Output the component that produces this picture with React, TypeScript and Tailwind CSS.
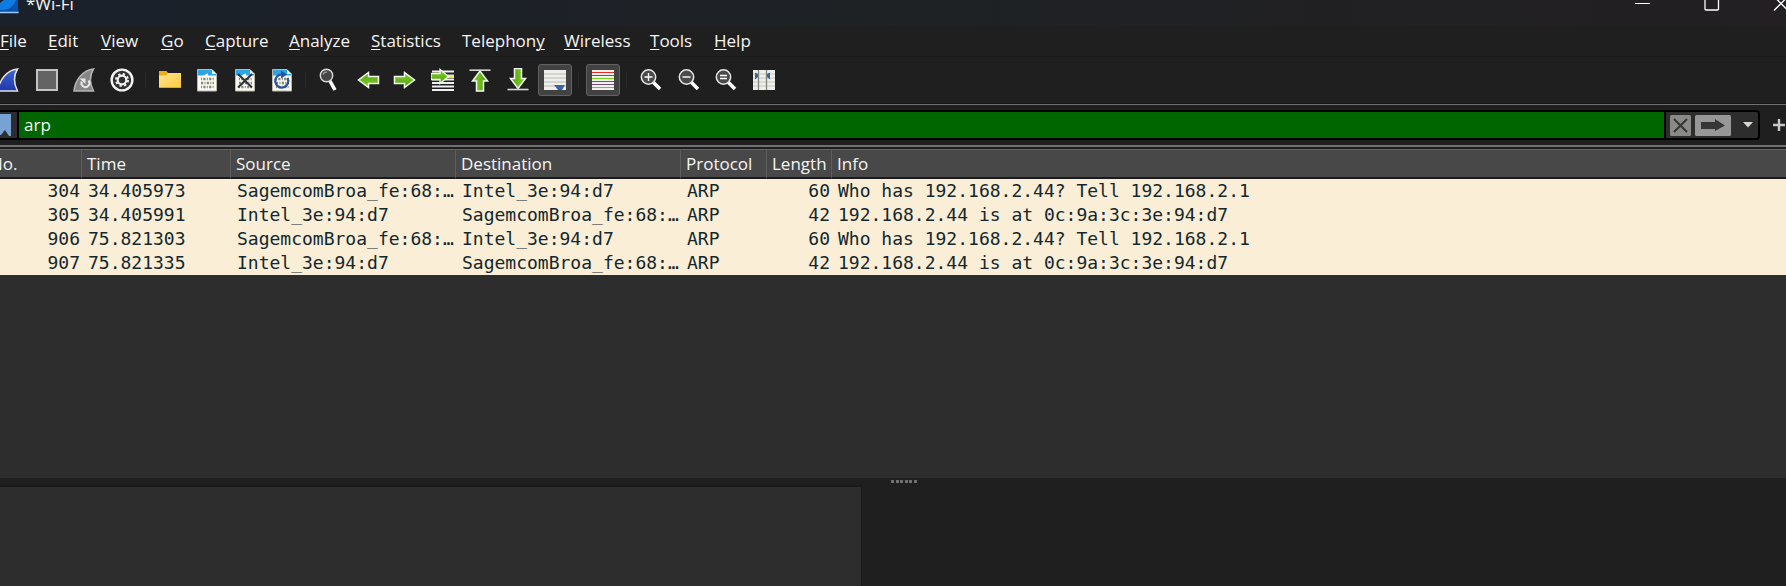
import React from "react";

type P = { children?: React.ReactNode };

const Icon = ({ children }: P) => (
  <svg width="24" height="24" viewBox="0 0 24 24" fill="none" aria-hidden="true" className="shrink-0">
    {children}
  </svg>
);

const FIN = "M1 23C2 12 10 2 20.5 1C16.5 7.500 17 16 20.500 23Z";

const Page = ({ children }: P) => (
  <Icon>
    <path d="M2.500 1.500H17L21.500 6V23H2.500Z" fill="#fbfbf3" stroke="#b9b9a8" />
    <path d="M3 2H17V6H21V7.500H13Q14 3.500 9 7.500H3Z" fill="#2fa4e4" />
    <path d="M17 2V6H21Z" fill="#e8f4fb" />
    {[10.5, 14.5, 18.5].map((y, i) => (
      <path key={y} d={`M6 ${y + 0.5}H19`} stroke="#85857c" strokeWidth="2.600" strokeDasharray={i === 1 ? "2.200 1.300 1 1.300" : "1 1.300 2.200 1.300"} />
    ))}
    {children}
  </Icon>
);

const Lens = ({ sign }: { sign: string }) => (
  <Icon>
    <path d="M14 14L21 21" stroke="#fff" strokeWidth="3.600" />
    <circle cx="9.500" cy="9" r="7.200" fill="#4a4a4a" stroke="#e6e6e6" strokeWidth="1.500" />
    <path d={sign} stroke="#fff" strokeWidth="1.400" />
  </Icon>
);

const RIGHT = "M1.500 8.500H11.500V4.500L21.500 12L11.500 19.500V15.500H1.500Z";

const Arrow = ({ turn, bar }: { turn?: string; bar?: string }) => (
  <Icon>
    <path d={RIGHT} transform={turn} fill="url(#green)" stroke="#f4f8ef" strokeWidth="1.500" />
    {bar && <path d={bar} stroke="#d8d8d8" strokeWidth="1.600" />}
  </Icon>
);

const Sep = () => <span className="mr-[7px] ml-1.5 h-4 w-px shrink-0 bg-[#2a2a2a]" />;

const Tool = ({ label, active, children }: P & { label: string; active?: boolean }) => (
  <button
    type="button"
    aria-label={label}
    className={
      active
        ? "flex h-8 w-[34px] shrink-0 items-center justify-center rounded-[3px] border border-[#626262] bg-[#424242]"
        : "flex h-8 w-[34px] shrink-0 items-center justify-center"
    }
  >
    {children}
  </button>
);

const menus: [string, string, string, string][] = [
  ["", "F", "ile", "w-12"],
  ["", "E", "dit", "w-[53px]"],
  ["", "V", "iew", "w-[60px]"],
  ["", "G", "o", "w-11"],
  ["", "C", "apture", "w-[84px]"],
  ["", "A", "nalyze", "w-[82px]"],
  ["", "S", "tatistics", "w-[91px]"],
  ["Telephon", "y", "", "w-[102px]"],
  ["", "W", "ireless", "w-[86px]"],
  ["", "T", "ools", "w-16"],
  ["", "H", "elp", "w-[60px]"],
];

const columns: [string, string][] = [
  ["No.", "w-[82px]"],
  ["Time", "w-[149px]"],
  ["Source", "w-[225px]"],
  ["Destination", "w-[225px]"],
  ["Protocol", "w-[86px]"],
  ["Length", "w-[65px]"],
  ["Info", ""],
];

const BROA = "SagemcomBroa_fe:68:…";
const INTEL = "Intel_3e:94:d7";
const ASK = "Who has 192.168.2.44? Tell 192.168.2.1";
const REPLY = "192.168.2.44 is at 0c:9a:3c:3e:94:d7";

const packets = [
  ["304", "34.405973", BROA, INTEL, "ARP", "60", ASK],
  ["305", "34.405991", INTEL, BROA, "ARP", "42", REPLY],
  ["906", "75.821303", BROA, INTEL, "ARP", "60", ASK],
  ["907", "75.821335", INTEL, BROA, "ARP", "42", REPLY],
];

export default function App() {
  return (
    <div className="flex min-h-screen flex-col overflow-hidden bg-[#1f1f1f] font-['Open_Sans','Noto_Sans',sans-serif] text-[17px] text-[#f5f5f5]">
      <svg width="0" height="0" className="absolute" aria-hidden="true">
        <defs>
          <linearGradient id="green" x1="0" y1="0" x2="0" y2="1">
            <stop offset="0" stopColor="#85cc2e" />
            <stop offset="1" stopColor="#4fa50a" />
          </linearGradient>
          <linearGradient id="blue" x1="0" y1="0" x2="0" y2="1">
            <stop offset="0" stopColor="#3c66d6" />
            <stop offset="1" stopColor="#2038a8" />
          </linearGradient>
          <linearGradient id="gold" x1="0" y1="0" x2="1" y2="1">
            <stop offset="0" stopColor="#ffe593" />
            <stop offset="1" stopColor="#ffc93b" />
          </linearGradient>
        </defs>
      </svg>

      <header className="flex h-[26px] items-start justify-between overflow-hidden bg-linear-to-r from-[#1b212b] via-[#1e2225] to-[#231f22]">
        <div className="flex items-start">
          <svg width="19" height="14" viewBox="0 0 19 14" aria-hidden="true">
            <path d="M0 3Q2 1 4 0H18Q17 6 18.500 13H0Z" fill="#0d7be0" />
            <path d="M0 10Q12 11 16 0H18Q17 6 18.500 13H0Z" fill="#0b52ae" />
            <path d="M0 12.500H18.500" stroke="#9cc9f2" strokeWidth="1.500" />
          </svg>
          <h1 className="-mt-2 ml-[7px] leading-6">*Wi-Fi</h1>
        </div>
        <div className="-mr-[3px] flex gap-[53px]">
          <button type="button" aria-label="Minimize">
            <svg width="16" height="12" viewBox="0 0 16 12" stroke="#fff" fill="none"><path d="M0 3.500H15" /></svg>
          </button>
          <button type="button" aria-label="Maximize">
            <svg width="16" height="12" viewBox="0 0 16 12" stroke="#fff" fill="none" strokeWidth="1.300"><rect x="1" y="-4" width="13.500" height="14" rx="1" /></svg>
          </button>
          <button type="button" aria-label="Close">
            <svg width="16" height="12" viewBox="0 0 16 12" stroke="#fff" fill="none" strokeWidth="1.300"><path d="M1 10.500L15 -3.500M1 -3.500L15 10.500" /></svg>
          </button>
        </div>
      </header>

      <nav className="flex h-[31px] items-center border-b border-[#191919]">
        {menus.map(([pre, key, post, width]) => (
          <button key={pre + key + post} type="button" className={`${width} shrink-0 text-left leading-6 whitespace-pre`}>
            {pre}
            <span className="underline decoration-1 underline-offset-2">{key}</span>
            {post}
          </button>
        ))}
      </nav>

      <div className="flex h-[47px] items-center border-b border-[#161616]">
        <div className="-ml-2 flex w-[147px] shrink-0 items-center justify-between">
          <Tool label="Start capture"><Icon><path d={FIN} fill="url(#blue)" stroke="#e2e2e2" strokeWidth="1.500" /></Icon></Tool>
          <Tool label="Stop capture"><Icon><rect x="2" y="2" width="20" height="20" fill="#646464" stroke="#c4c4c4" strokeWidth="2" /></Icon></Tool>
          <Tool label="Restart capture">
            <Icon>
              <path d={FIN} transform="translate(1 0)" fill="#868686" stroke="#b4b4b4" strokeWidth="1.500" />
              <path d="M16.500 12.500A4 4 0 1 1 9.800 13.500" stroke="#e8e8e8" strokeWidth="2" />
              <path d="M7.500 10.500H13.500V16Z" fill="#e8e8e8" />
            </Icon>
          </Tool>
          <Tool label="Capture options">
            <Icon>
              <circle cx="12" cy="12" r="10.400" fill="#303030" stroke="#f4f4f4" strokeWidth="2.400" />
              <circle cx="12" cy="12" r="4.300" stroke="#f4f4f4" strokeWidth="2.200" />
              <circle cx="12" cy="12" r="6.100" stroke="#f4f4f4" strokeWidth="1.800" strokeDasharray="2.400 2.390" />
            </Icon>
          </Tool>
        </div>
        <Sep />
        <div className="flex w-[146px] shrink-0 items-center justify-between">
          <Tool label="Open">
            <Icon>
              <path d="M1 3H8.500L10 5H23V10H1Z" fill="#f0ae14" />
              <path d="M1 7.500H8L10 5H23V20H1Z" fill="url(#gold)" />
              <path d="M1 19.500H23" stroke="#e0a52a" />
            </Icon>
          </Tool>
          <Tool label="Save"><Page /></Tool>
          <Tool label="Close file"><Page><path d="M5 6L19 19.500M19 6L5 19.500" stroke="#2b3338" strokeWidth="2" /></Page></Tool>
          <Tool label="Reload">
            <Page>
              <path d="M17.500 10A6.500 6.500 0 1 1 12 6.500" stroke="#24549f" strokeWidth="2.200" />
              <path d="M11 2.500L17 6.500L11 10.500Z" fill="#24549f" />
            </Page>
          </Tool>
        </div>
        <Sep />
        <div className="flex w-[259px] shrink-0 items-center justify-between">
          <Tool label="Find">
            <Icon>
              <path d="M12 13L17 22" stroke="#fff" strokeWidth="3.600" />
              <circle cx="8.500" cy="7.500" r="6.200" fill="#454545" stroke="#dedede" strokeWidth="1.400" />
              <path d="M5 6.500Q6 4 9 4" stroke="#999" strokeWidth="1.400" />
            </Icon>
          </Tool>
          <Tool label="Previous packet"><Arrow turn="rotate(180 12 12)" /></Tool>
          <Tool label="Next packet"><Arrow /></Tool>
          <Tool label="Go to packet">
            <Icon>
              <path d="M1 3.500H23M1 7.500H23M1 11.500H23M1 15H23M1 18.500H23M1 22H23" stroke="#f0f0f0" strokeWidth="2" />
              <path d="M16 8.500H23" stroke="#ffe34d" strokeWidth="3" />
              <path d="M0 5.500H9V1.500L17.500 8.500L9 15.500V11.500H0Z" fill="url(#green)" stroke="#f4f8ef" strokeWidth="1.300" />
            </Icon>
          </Tool>
          <Tool label="First packet"><Arrow turn="rotate(-90 12 12) translate(-.500 0)" bar="M1.500 2.200H22.500" /></Tool>
          <Tool label="Last packet"><Arrow turn="rotate(90 12 12) translate(-1 0)" bar="M1.500 21.500H22.500" /></Tool>
          <Tool label="Auto scroll" active>
            <Icon>
              <path d="M1 2H23V22H1Z" fill="#eeeeea" />
              <path d="M1 6H23M1 10H23M1 14H23M1 18H23" stroke="#b9b9b4" strokeWidth="1.200" />
              <path d="M11 17H22L19 22H15Z" fill="#3465a4" />
            </Icon>
          </Tool>
        </div>
        <Sep />
        <Tool label="Colorize" active>
          <Icon>
            <path d="M1 2H23V22H1Z" fill="#f1f1ee" />
            <path d="M1 4.500H23" stroke="#ef2929" />
            <path d="M1 7.500H23M1 13.500H23" stroke="#3465a4" />
            <path d="M1 10.500H23" stroke="#73d216" />
            <path d="M1 16.500H23" stroke="#75507b" />
            <path d="M1 19.500H23" stroke="#c4a000" />
          </Icon>
        </Tool>
        <Sep />
        <div className="flex w-[147px] shrink-0 items-center justify-between">
          <Tool label="Zoom in"><Lens sign="M5.500 9H13.500M9.500 5V13" /></Tool>
          <Tool label="Zoom out"><Lens sign="M5.500 9H13.500" /></Tool>
          <Tool label="Normal size"><Lens sign="M6 7.500H13M6 10.500H13" /></Tool>
          <Tool label="Resize columns">
            <Icon>
              <path d="M1 2H23V22H1Z" fill="#eeeeea" />
              <path d="M1 6H23M1 10H23M1 14H23M1 18H23" stroke="#c6c6c2" strokeWidth="1.200" />
              <path d="M6.500 2V22M14.500 2V22" stroke="#85857f" strokeWidth="1.300" />
              <path d="M3 4.500L6 6V9L3 11.500ZM18 4.500L15 6V9L18 11.500Z" fill="#3465a4" />
            </Icon>
          </Tool>
        </div>
      </div>

      <div className="flex h-[43px] items-center gap-[13px] border-t border-b-2 border-[#707070]">
        <div className="flex h-[30px] min-w-0 flex-1 overflow-hidden rounded-r-[4px] border-2 border-l-0 border-black bg-[#2d2d2d]">
          <button type="button" aria-label="Filter bookmarks" className="flex w-[17px] shrink-0 items-center">
            <svg width="11" height="22" viewBox="0 0 11 22"><path d="M0 0H11V22H9L5 16L1 21H0Z" fill="#76a3d4" /></svg>
          </button>
          <input
            aria-label="Display filter"
            defaultValue="arp"
            className="min-w-0 flex-1 border-x-2 border-black bg-[#006700] pl-[5px] text-[17px] text-[#f5f5f5] outline-none"
          />
          <div className="flex shrink-0 items-center gap-1 pl-1">
            <button type="button" aria-label="Clear filter">
              <svg width="21" height="21" viewBox="0 0 21 21"><rect width="21" height="21" rx="1.500" fill="#8a8a86" /><path d="M4 4L17 17M17 4L4 17" stroke="#363636" strokeWidth="2" /></svg>
            </button>
            <button type="button" aria-label="Apply filter">
              <svg width="36" height="21" viewBox="0 0 36 21"><rect width="36" height="21" rx="1.500" fill="#979797" /><path d="M6 7H20V4L30 10.500L20 16V14H6Z" fill="#363636" /></svg>
            </button>
            <button type="button" aria-label="Recent filters" className="pr-[5px] pl-2">
              <svg width="10" height="6" viewBox="0 0 10 6"><path d="M0 0H10L5 5.500Z" fill="#d8d8d2" /></svg>
            </button>
          </div>
        </div>
        <button type="button" aria-label="Add filter button" className="pr-px">
          <svg width="12" height="12" viewBox="0 0 12 12"><path d="M0 6H12M6 0V12" stroke="#c8c8c8" strokeWidth="2.400" /></svg>
        </button>
      </div>

      <main className="mt-[2px] h-[329px] shrink-0 overflow-hidden bg-[#2d2d2d]">
        <table className="w-full table-fixed border-separate border-spacing-0">
          <thead>
            <tr>
              {columns.map(([name, width], i) => (
                <th
                  key={name}
                  scope="col"
                  className={`${width} h-[30px] border-t border-b-2 border-t-[#646464] border-b-[#1b1b1b] bg-[#484848] py-0 pr-0 ${i === 0 ? "pl-0" : "pl-[5px]"} ${i < 6 ? "border-r border-r-[#5e5e5e]" : ""} text-left text-[17px] leading-6 font-normal whitespace-nowrap`}
                >
                  {i === 0 ? <span className="-ml-2.5">{name}</span> : name}
                </th>
              ))}
            </tr>
          </thead>
          <tbody className="bg-[#faeed7] font-['DejaVu_Sans_Mono','Liberation_Mono',monospace] text-lg leading-6 text-[#12272e]">
            {packets.map((row) => (
              <tr key={row[0]}>
                {row.map((cell, i) => (
                  <td
                    key={i}
                    className={
                      i === 0 || i === 5
                        ? "h-6 py-0 pr-0.5 pl-0 text-right whitespace-nowrap"
                        : "h-6 py-0 pr-0 pl-1.5 whitespace-nowrap"
                    }
                  >
                    {cell}
                  </td>
                ))}
              </tr>
            ))}
          </tbody>
        </table>
      </main>

      <div className="flex h-[7px] items-center justify-center pl-[22px]">
        <div className="flex w-[26px] justify-between">
          {[0, 1, 2, 3, 4, 5].map((n) => (
            <span key={n} className="size-[3px] bg-[#707070]" />
          ))}
        </div>
      </div>

      <div className="flex flex-1">
        <section aria-label="Packet details" className="w-[862px] border-t-2 border-r border-[#191919] bg-[#2d2d2d]" />
        <section aria-label="Packet bytes" className="flex-1" />
      </div>
    </div>
  );
}
